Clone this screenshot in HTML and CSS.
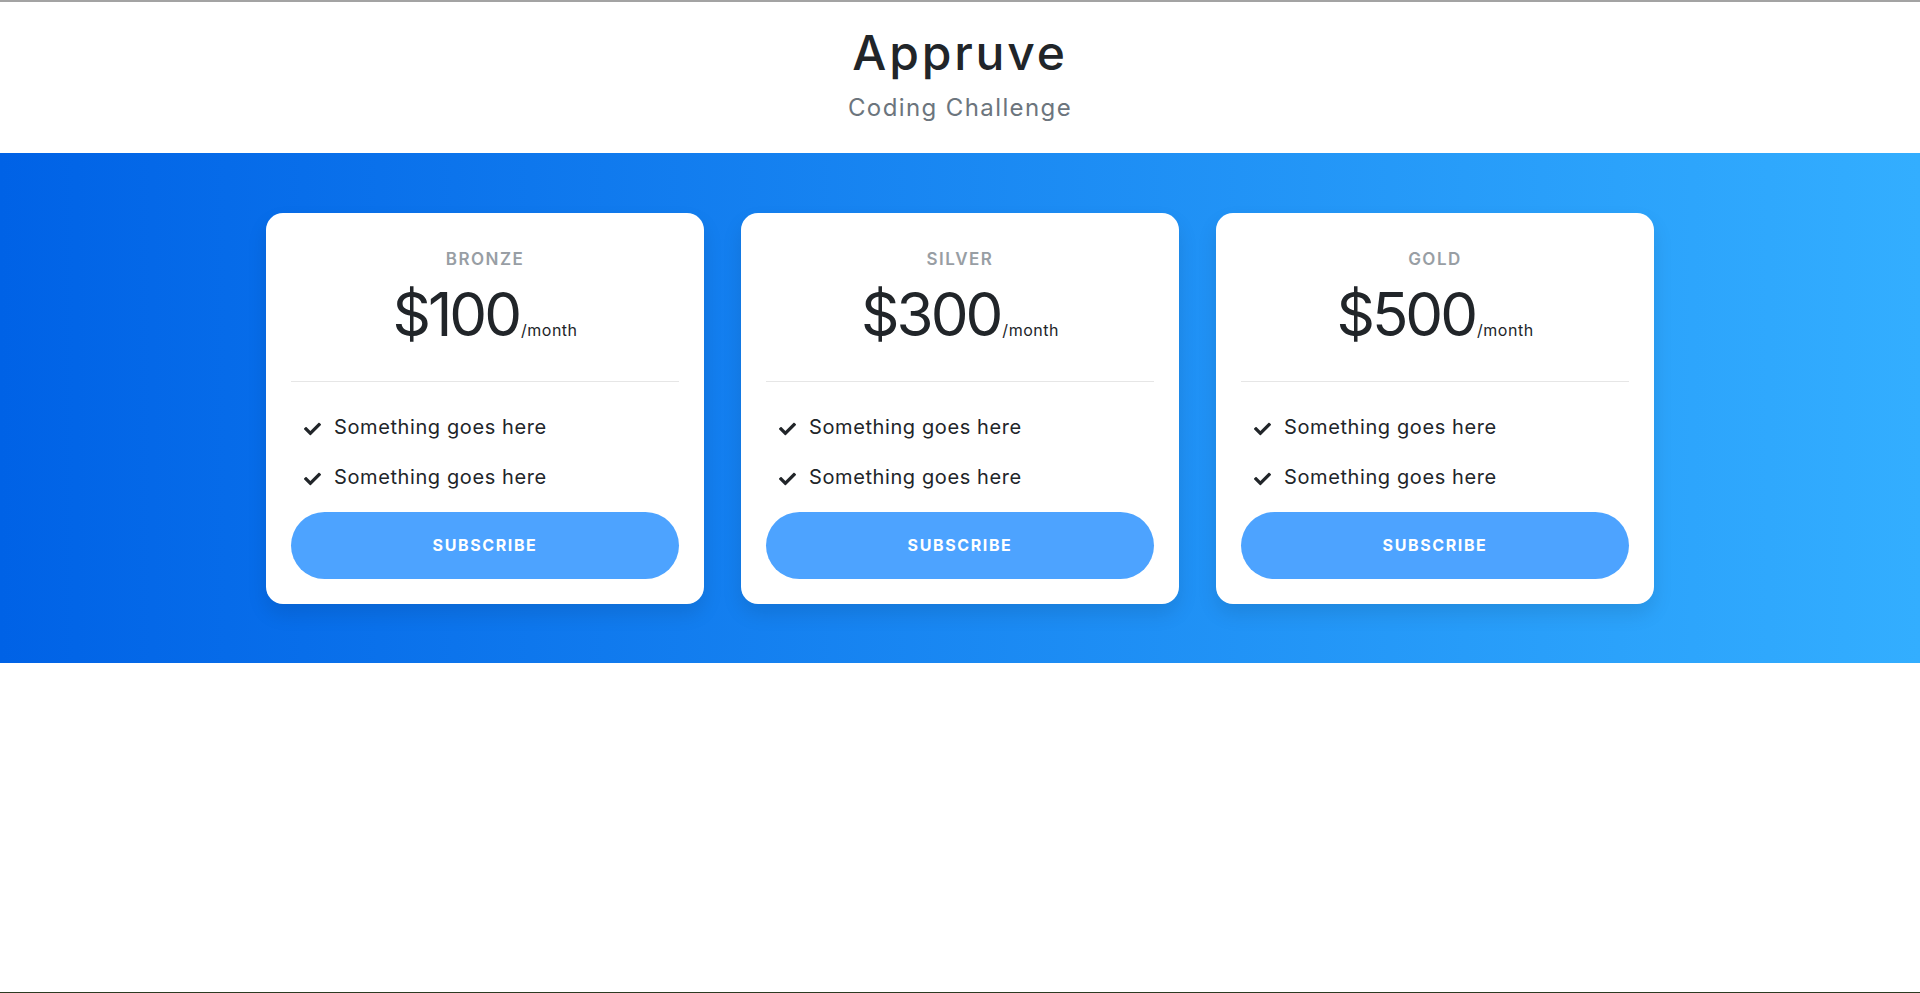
FILE: index.html
```html
<!DOCTYPE html>
<html lang="en">
<head>
<meta charset="utf-8">
<title>Appruve</title>
<link rel="stylesheet" href="styles.css">
</head>
<body>
<div class="page">
  <div class="topline"></div>
  <header class="header">
    <h1 class="brand">Appruve</h1>
    <p class="tagline">Coding Challenge</p>
  </header>
  <section class="pricing">
    <div class="cards">
      <div class="card">
        <h5 class="card-title">BRONZE</h5>
        <h6 class="card-price"><span class="amount">$100</span><span class="period">/month</span></h6>
        <hr class="divider">
        <ul class="features">
          <li class="feature"><svg class="check" viewBox="0 60 512 392"><path d="M173.898 439.404l-166.4-166.4c-9.997-9.997-9.997-26.206 0-36.204l36.203-36.204c9.997-9.998 26.207-9.998 36.204 0L192 312.69 432.095 72.596c9.997-9.997 26.207-9.997 36.204 0l36.203 36.204c9.997 9.997 9.997 26.206 0 36.204l-294.4 294.401c-9.998 9.997-26.207 9.997-36.204-.001z"/></svg><span>Something goes here</span></li>
          <li class="feature"><svg class="check" viewBox="0 60 512 392"><path d="M173.898 439.404l-166.4-166.4c-9.997-9.997-9.997-26.206 0-36.204l36.203-36.204c9.997-9.998 26.207-9.998 36.204 0L192 312.69 432.095 72.596c9.997-9.997 26.207-9.997 36.204 0l36.203 36.204c9.997 9.997 9.997 26.206 0 36.204l-294.4 294.401c-9.998 9.997-26.207 9.997-36.204-.001z"/></svg><span>Something goes here</span></li>
        </ul>
        <a class="btn">SUBSCRIBE</a>
      </div>
      <div class="card">
        <h5 class="card-title">SILVER</h5>
        <h6 class="card-price"><span class="amount">$300</span><span class="period">/month</span></h6>
        <hr class="divider">
        <ul class="features">
          <li class="feature"><svg class="check" viewBox="0 60 512 392"><path d="M173.898 439.404l-166.4-166.4c-9.997-9.997-9.997-26.206 0-36.204l36.203-36.204c9.997-9.998 26.207-9.998 36.204 0L192 312.69 432.095 72.596c9.997-9.997 26.207-9.997 36.204 0l36.203 36.204c9.997 9.997 9.997 26.206 0 36.204l-294.4 294.401c-9.998 9.997-26.207 9.997-36.204-.001z"/></svg><span>Something goes here</span></li>
          <li class="feature"><svg class="check" viewBox="0 60 512 392"><path d="M173.898 439.404l-166.4-166.4c-9.997-9.997-9.997-26.206 0-36.204l36.203-36.204c9.997-9.998 26.207-9.998 36.204 0L192 312.69 432.095 72.596c9.997-9.997 26.207-9.997 36.204 0l36.203 36.204c9.997 9.997 9.997 26.206 0 36.204l-294.4 294.401c-9.998 9.997-26.207 9.997-36.204-.001z"/></svg><span>Something goes here</span></li>
        </ul>
        <a class="btn">SUBSCRIBE</a>
      </div>
      <div class="card">
        <h5 class="card-title">GOLD</h5>
        <h6 class="card-price"><span class="amount">$500</span><span class="period">/month</span></h6>
        <hr class="divider">
        <ul class="features">
          <li class="feature"><svg class="check" viewBox="0 60 512 392"><path d="M173.898 439.404l-166.4-166.4c-9.997-9.997-9.997-26.206 0-36.204l36.203-36.204c9.997-9.998 26.207-9.998 36.204 0L192 312.69 432.095 72.596c9.997-9.997 26.207-9.997 36.204 0l36.203 36.204c9.997 9.997 9.997 26.206 0 36.204l-294.4 294.401c-9.998 9.997-26.207 9.997-36.204-.001z"/></svg><span>Something goes here</span></li>
          <li class="feature"><svg class="check" viewBox="0 60 512 392"><path d="M173.898 439.404l-166.4-166.4c-9.997-9.997-9.997-26.206 0-36.204l36.203-36.204c9.997-9.998 26.207-9.998 36.204 0L192 312.69 432.095 72.596c9.997-9.997 26.207-9.997 36.204 0l36.203 36.204c9.997 9.997 9.997 26.206 0 36.204l-294.4 294.401c-9.998 9.997-26.207 9.997-36.204-.001z"/></svg><span>Something goes here</span></li>
        </ul>
        <a class="btn">SUBSCRIBE</a>
      </div>
    </div>
  </section>
  <div class="bottomline"></div>
</div>
</body>
</html>
```

FILE: styles.css
```css
* { box-sizing: border-box; }
html, body { margin: 0; padding: 0; }
body {
  font-family: "Inter", "Liberation Sans", sans-serif;
  color: #212529;
  background: #fff;
}
.page {
  min-height: 100vh;
  display: flex;
  flex-direction: column;
}
.topline {
  height: 2px;
  background: #a3a3a3;
}
.header {
  height: 151px;
  padding-top: 22px;
  text-align: center;
}
.brand {
  margin: 0;
  font-size: 48px;
  line-height: 58px;
  font-weight: 500;
  letter-spacing: 2.8px;
}
.tagline {
  margin: 8px 0 0;
  font-size: 24px;
  line-height: 36px;
  font-weight: 400;
  letter-spacing: 1.4px;
  color: #6c757d;
}
.pricing {
  height: 510px;
  padding-top: 60px;
  background: linear-gradient(to right, #0062E6, #33AEFF);
}
.cards {
  display: grid;
  grid-template-columns: repeat(3, 438px);
  gap: 37px;
  justify-content: center;
}
.card {
  background: #fff;
  border-radius: 17px;
  padding: 25px;
  height: 391px;
  box-shadow: 0 10px 20px 0 rgba(0,0,0,0.1);
  display: flex;
  flex-direction: column;
}
.card-title {
  margin: 10px 0;
  text-align: center;
  font-size: 17px;
  line-height: 22px;
  font-weight: 600;
  letter-spacing: 1.5px;
  color: #989ea4;
}
.card-price {
  margin: 0;
  text-align: center;
  font-size: 60px;
  line-height: 68px;
  font-weight: 400;
  color: #212529;
}
.amount {
  letter-spacing: -3px;
}
.period {
  font-size: 16px;
  line-height: 1;
  letter-spacing: 0.5px;
  margin-left: 2px;
}
.divider {
  border: 0;
  border-top: 1px solid #e6e6e6;
  margin: 33px 0 30px;
}
.features {
  list-style: none;
  margin: 0;
  padding: 0 0 0 13px;
}
.feature {
  display: flex;
  align-items: center;
  font-size: 20px;
  line-height: 30px;
  letter-spacing: 0.6px;
  margin-bottom: 20px;
}
.check {
  width: 17px;
  height: 14px;
  margin: 3px 13px 0 0;
  fill: #212529;
  flex: none;
}
.btn {
  display: block;
  height: 67px;
  line-height: 67px;
  border-radius: 40px;
  background: #4da3ff;
  color: #fff;
  text-align: center;
  font-size: 16px;
  font-weight: 700;
  letter-spacing: 1.6px;
}
.bottomline {
  margin-top: auto;
  height: 1px;
  background: #2d3a22;
}
```
